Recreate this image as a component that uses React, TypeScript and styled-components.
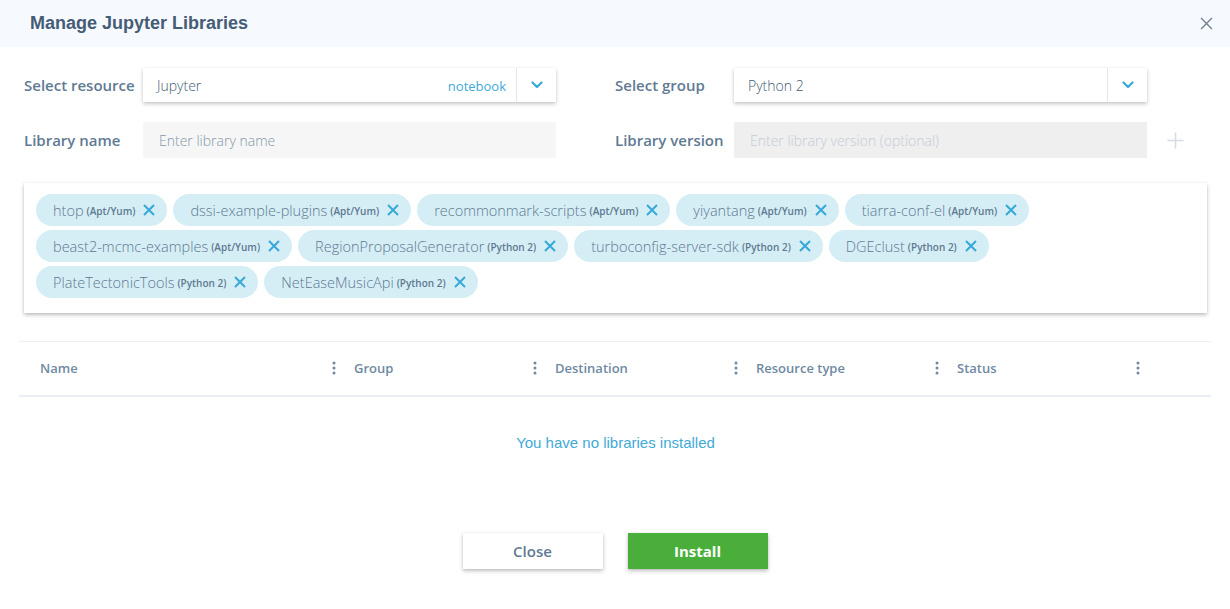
import React from "react";
import styled, { createGlobalStyle } from "styled-components";

const Global = createGlobalStyle`
  html, body { margin: 0; padding: 0; background: #fff; }
  body { font-family: "Open Sans", "Liberation Sans", sans-serif; }
  * { box-sizing: border-box; }
`;

const Dialog = styled.div`
  width: 1230px;
  height: 609px;
  background: #fff;
  display: flex;
  flex-direction: column;
`;

const Header = styled.header`
  height: 47px;
  background: #f6f9fe;
  display: flex;
  align-items: center;
  justify-content: space-between;
  padding: 0 16px 0 30px;
`;

const Title = styled.h1`
  margin: 0;
  font-family: "Liberation Sans", Arial, sans-serif;
  font-weight: 700;
  font-size: 18px;
  color: #455c75;
`;

const CloseIcon = styled.button`
  border: 0;
  background: none;
  padding: 0;
  width: 14px;
  height: 14px;
  display: flex;
  color: #6e7f90;
  margin-top: 1px;
`;

const Body = styled.div`
  padding: 21px 23px 0 24px;
  display: flex;
  flex-direction: column;
`;

const FormGrid = styled.div`
  display: grid;
  grid-template-columns: 119px 413px 59px 119px 413px 1fr;
  grid-template-rows: 34px 36px;
  row-gap: 20px;
  align-items: center;
`;

const Label = styled.label`
  font-weight: 600;
  font-size: 15px;
  color: #5f7a93;
  white-space: nowrap;
`;

const SelectBox = styled.div`
  height: 34px;
  display: flex;
  align-items: stretch;
  background: #fff;
  box-shadow: 0 2px 4px rgba(0, 0, 0, 0.22), 0 0 1px rgba(0, 0, 0, 0.08);
`;

const SelectValue = styled.div`
  flex: 1;
  display: flex;
  align-items: center;
  justify-content: space-between;
  padding: 1px 10px 0 14px;
  font-weight: 300;
  font-size: 14px;
  color: #455c75;
`;

const Hint = styled.span`
  font-size: 13px;
  font-weight: 400;
  color: #3fa9d8;
`;

const Caret = styled.div`
  width: 40px;
  border-left: 1px solid #e6e6e6;
  display: flex;
  align-items: center;
  justify-content: center;
  color: #36a9d8;
`;

const TextInput = styled.input<{ $disabled?: boolean }>`
  height: 36px;
  width: 100%;
  border: 0;
  outline: none;
  padding: 0 16px;
  font-family: "Open Sans", sans-serif;
  font-weight: 300;
  font-size: 14px;
  background: ${(p) => (p.$disabled ? "#efefef" : "#f6f6f6")};
  &::placeholder {
    color: ${(p) => (p.$disabled ? "#c3ccd6" : "#8398ab")};
  }
`;

const PlusBtn = styled.div`
  display: flex;
  align-items: center;
  padding-left: 20px;
  color: #d6dce2;
`;

const Spacer = styled.div``;

const ChipsBox = styled.div`
  margin-top: 25px;
  min-height: 130px;
  padding: 11px 12px;
  display: flex;
  flex-wrap: wrap;
  align-content: flex-start;
  gap: 4px 6px;
  box-shadow: 0 2px 4px rgba(0, 0, 0, 0.25), 0 0 1px rgba(0, 0, 0, 0.1);
`;

const Chip = styled.div`
  height: 32px;
  border-radius: 16px;
  background: #d5eef6;
  display: flex;
  align-items: center;
  padding: 0 12px 0 17px;
  font-weight: 300;
  font-size: 14.5px;
  color: #5e7990;
  white-space: nowrap;
`;

const ChipTag = styled.span`
  font-size: 10px;
  font-weight: 600;
  margin-left: 3px;
  margin-top: 2px;
`;

const ChipX = styled.span`
  display: flex;
  margin-left: 8px;
  color: #36a9d8;
`;

const Table = styled.div`
  margin: 28px -4px 0 -5px;
  border-top: 1px solid #eef0f5;
`;

const HeadRow = styled.div`
  height: 55px;
  display: grid;
  grid-template-columns: 321px 201px 201px 201px 201px 1fr;
  border-bottom: 2px solid #e9eef3;
`;

const HeadCell = styled.div<{ $first?: boolean }>`
  display: flex;
  align-items: center;
  justify-content: space-between;
  padding-left: ${(p) => (p.$first ? 21 : 14)}px;
  padding-right: 4px;
  padding-bottom: 1px;
  font-weight: 600;
  font-size: 13px;
  color: #6f89a2;
`;

const Dots = styled.span`
  display: flex;
  color: #6f89a2;
`;

const Empty = styled.div`
  text-align: center;
  margin-top: 37px;
  font-family: "Liberation Sans", Arial, sans-serif;
  font-size: 15px;
  color: #3fa9d8;
`;

const Footer = styled.div`
  margin-top: 82px;
  display: flex;
  justify-content: center;
  gap: 25px;
  padding-right: 1px;
`;

const Button = styled.button<{ $primary?: boolean }>`
  width: 140px;
  height: 36px;
  border: 0;
  font-family: "Open Sans", sans-serif;
  font-weight: ${(p) => (p.$primary ? 700 : 600)};
  font-size: 15px;
  color: ${(p) => (p.$primary ? "#fff" : "#5f7a93")};
  background: ${(p) => (p.$primary ? "#4aae3a" : "#fff")};
  box-shadow: 0 2px 4px rgba(0, 0, 0, 0.25), 0 0 1px rgba(0, 0, 0, 0.1);
`;

const Chevron = () => (
  <svg width="12" height="8" viewBox="0 0 12 8">
    <path d="M1.5 1.5 L6 6 L10.5 1.5" fill="none" stroke="currentColor" strokeWidth="2.2" strokeLinecap="round" strokeLinejoin="round" />
  </svg>
);

const XIcon = ({ size = 12, w = 2 }: { size?: number; w?: number }) => (
  <svg width={size} height={size} viewBox="0 0 12 12">
    <path d="M1 1 L11 11 M11 1 L1 11" stroke="currentColor" strokeWidth={w} fill="none" />
  </svg>
);

const DotsIcon = () => (
  <svg width="4" height="14" viewBox="0 0 4 14">
    <circle cx="2" cy="2" r="1.5" fill="currentColor" />
    <circle cx="2" cy="7" r="1.5" fill="currentColor" />
    <circle cx="2" cy="12" r="1.5" fill="currentColor" />
  </svg>
);

const chips: [string, string][] = [
  ["htop", "Apt/Yum"],
  ["dssi-example-plugins", "Apt/Yum"],
  ["recommonmark-scripts", "Apt/Yum"],
  ["yiyantang", "Apt/Yum"],
  ["tiarra-conf-el", "Apt/Yum"],
  ["beast2-mcmc-examples", "Apt/Yum"],
  ["RegionProposalGenerator", "Python 2"],
  ["turboconfig-server-sdk", "Python 2"],
  ["DGEclust", "Python 2"],
  ["PlateTectonicTools", "Python 2"],
  ["NetEaseMusicApi", "Python 2"],
];

const columns = ["Name", "Group", "Destination", "Resource type", "Status"];

export default function App() {
  return (
    <>
      <Global />
      <Dialog>
        <Header>
          <Title>Manage Jupyter Libraries</Title>
          <CloseIcon aria-label="close">
            <XIcon size={13} w={1.2} />
          </CloseIcon>
        </Header>
        <Body>
          <FormGrid>
            <Label>Select resource</Label>
            <SelectBox>
              <SelectValue>
                <span>Jupyter</span>
                <Hint>notebook</Hint>
              </SelectValue>
              <Caret>
                <Chevron />
              </Caret>
            </SelectBox>
            <Spacer />
            <Label>Select group</Label>
            <SelectBox>
              <SelectValue>
                <span>Python 2</span>
              </SelectValue>
              <Caret>
                <Chevron />
              </Caret>
            </SelectBox>
            <Spacer />
            <Label>Library name</Label>
            <TextInput placeholder="Enter library name" />
            <Spacer />
            <Label>Library version</Label>
            <TextInput $disabled placeholder="Enter library version (optional)" disabled />
            <PlusBtn>
              <svg width="17" height="17" viewBox="0 0 17 17">
                <path d="M8.5 0.5 V16.5 M0.5 8.5 H16.5" stroke="currentColor" strokeWidth="1.6" />
              </svg>
            </PlusBtn>
          </FormGrid>
          <ChipsBox>
            {chips.map(([name, tag]) => (
              <Chip key={name}>
                {name}
                <ChipTag>({tag})</ChipTag>
                <ChipX>
                  <XIcon size={12} w={2} />
                </ChipX>
              </Chip>
            ))}
          </ChipsBox>
          <Table>
            <HeadRow>
              {columns.map((c, i) => (
                <HeadCell key={c} $first={i === 0}>
                  {c}
                  <Dots>
                    <DotsIcon />
                  </Dots>
                </HeadCell>
              ))}
            </HeadRow>
          </Table>
          <Empty>You have no libraries installed</Empty>
          <Footer>
            <Button>Close</Button>
            <Button $primary>Install</Button>
          </Footer>
        </Body>
      </Dialog>
    </>
  );
}
